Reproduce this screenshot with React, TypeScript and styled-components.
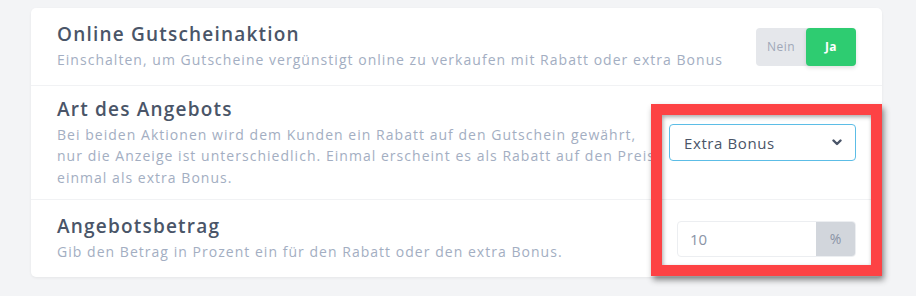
import React from 'react'
import styled, { createGlobalStyle } from 'styled-components'

const GlobalStyle = createGlobalStyle`
  body {
    margin: 0;
    background: #f3f4f6;
    font-family: 'Open Sans', 'Liberation Sans', sans-serif;
  }
`

export default function App() {
  return (
    <>
      <GlobalStyle />
      <Page>
        <Card>
          <Row>
            <Text>
              <Title>Online Gutscheinaktion</Title>
              <Description>
                Einschalten, um Gutscheine vergünstigt online zu verkaufen mit Rabatt oder extra Bonus
              </Description>
            </Text>
            <Toggle>
              <ToggleOption>Nein</ToggleOption>
              <ToggleOption active>Ja</ToggleOption>
            </Toggle>
          </Row>
          <Row>
            <Text>
              <Title>Art des Angebots</Title>
              <Description>
                Bei beiden Aktionen wird dem Kunden ein Rabatt auf den Gutschein gewährt,
                <br />
                nur die Anzeige ist unterschiedlich. Einmal erscheint es als Rabatt auf den Preis
                <br />
                einmal als extra Bonus.
              </Description>
            </Text>
            <Select>
              <span>Extra Bonus</span>
              <svg width="10" height="7" viewBox="0 0 10 7">
                <path d="M1.5 1.5 L5 5 L8.5 1.5" fill="none" stroke="#4a5568" strokeWidth="2.4" strokeLinecap="round" strokeLinejoin="round" />
              </svg>
            </Select>
          </Row>
          <Row>
            <Text>
              <Title>Angebotsbetrag</Title>
              <Description>Gib den Betrag in Prozent ein für den Rabatt oder den extra Bonus.</Description>
            </Text>
            <InputGroup>
              <Input>10</Input>
              <Addon>%</Addon>
            </InputGroup>
          </Row>
        </Card>
        <Highlight />
      </Page>
    </>
  )
}

const Page = styled.div`
  position: relative;
  width: 916px;
  height: 296px;
  padding: 8px 34px 0 31px;
  box-sizing: border-box;
`

const Card = styled.div`
  width: 851px;
  height: 269px;
  background: #fff;
  border-radius: 5px;
  box-shadow: 0 1px 3px rgba(0, 0, 0, 0.06);
  display: flex;
  flex-direction: column;
`

const Row = styled.div`
  display: grid;
  grid-template-columns: 1fr auto;
  align-items: center;
  padding: 0 26px;
  min-height: 77px;
  border-bottom: 1px solid #f1f2f4;

  &:nth-child(2) {
    min-height: 113px;
  }

  &:last-child {
    border-bottom: none;
  }
`

const Text = styled.div`
  display: flex;
  flex-direction: column;
  gap: 3px;
`

const Title = styled.div`
  font-size: 19px;
  font-weight: 600;
  letter-spacing: 1.2px;
  color: #4a5568;
  line-height: 24px;
`

const Description = styled.div`
  font-size: 14px;
  letter-spacing: 1.03px;
  color: #a3aec2;
  line-height: 21.5px;
`

const Toggle = styled.div`
  display: flex;
  border-radius: 4px;
  background: #e5e7eb;
`

const ToggleOption = styled.div<{ active?: boolean }>`
  width: 50px;
  height: 38px;
  display: flex;
  align-items: center;
  justify-content: center;
  font-size: 12px;
  letter-spacing: 0.5px;
  font-weight: ${p => (p.active ? 700 : 500)};
  color: ${p => (p.active ? '#fff' : '#a0a8b8')};
  background: ${p => (p.active ? '#2ecc71' : 'transparent')};
  border-radius: 4px;
  box-shadow: ${p => (p.active ? '0 2px 4px rgba(0, 0, 0, 0.12)' : 'none')};
`

const Select = styled.div`
  width: 187px;
  height: 37px;
  box-sizing: border-box;
  border: 1px solid #5cbde6;
  border-radius: 4px;
  display: flex;
  align-items: center;
  justify-content: space-between;
  padding: 0 13px 0 14px;
  font-size: 15px;
  letter-spacing: 0.6px;
  color: #4a5568;
`

const InputGroup = styled.div`
  width: 179px;
  height: 36px;
  box-sizing: border-box;
  border: 1px solid #eceef1;
  border-radius: 4px;
  display: flex;
  overflow: hidden;
`

const Input = styled.div`
  flex: 1;
  display: flex;
  align-items: center;
  padding-left: 12px;
  font-size: 15px;
  color: #8a94a6;
`

const Addon = styled.div`
  width: 39px;
  display: flex;
  align-items: center;
  justify-content: center;
  background: #d2d6dc;
  font-size: 14px;
  color: #8a94a6;
`

const Highlight = styled.div`
  position: absolute;
  left: 651px;
  top: 104px;
  width: 231px;
  height: 172px;
  box-sizing: border-box;
  border: 11px solid #fd4244;
  box-shadow: 2px 4px 6px rgba(0, 0, 0, 0.45), inset 1px 2px 4px rgba(0, 0, 0, 0.35);
  pointer-events: none;
`
